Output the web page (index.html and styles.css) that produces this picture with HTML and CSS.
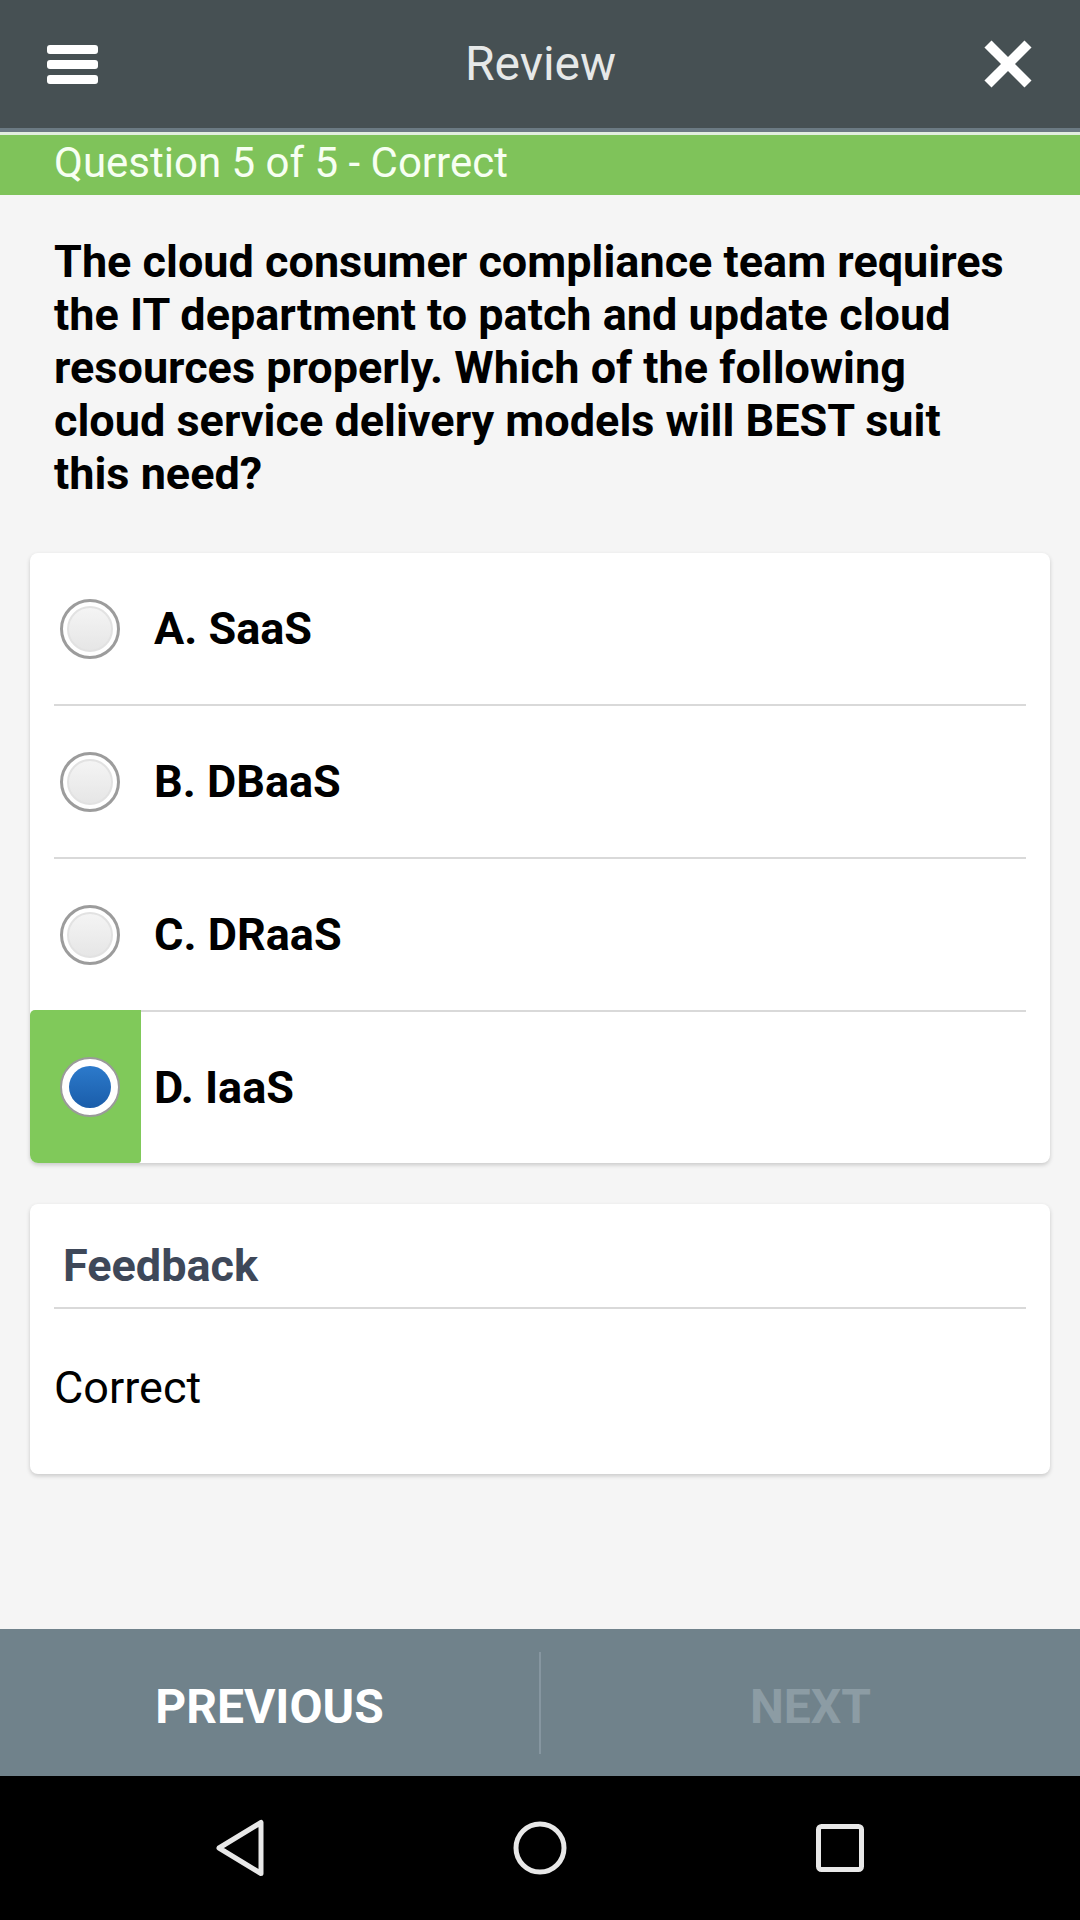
FILE: index.html
```html
<!DOCTYPE html>
<html lang="en">
<head>
<meta charset="utf-8">
<title>Review</title>
<link rel="stylesheet" href="styles.css">
</head>
<body>
<div class="app">
  <header class="topbar">
    <div class="menu-icon"><span></span><span></span><span></span></div>
    <h1 class="title">Review</h1>
    <svg class="close-icon" width="50" height="48" viewBox="0 0 50 48">
      <line x1="5" y1="4" x2="45" y2="44" />
      <line x1="45" y1="4" x2="5" y2="44" />
    </svg>
  </header>
  <div class="status">Question 5 of 5 - Correct</div>

  <main class="content">
    <p class="question">The cloud consumer compliance team requires the IT department to patch and update cloud resources properly. Which of the following cloud service delivery models will BEST suit this need?</p>

    <div class="card options">
      <div class="option">
        <div class="radio-cell"><span class="radio"></span></div>
        <span class="label">A. SaaS</span>
      </div>
      <div class="divider"></div>
      <div class="option">
        <div class="radio-cell"><span class="radio"></span></div>
        <span class="label">B. DBaaS</span>
      </div>
      <div class="divider"></div>
      <div class="option">
        <div class="radio-cell"><span class="radio"></span></div>
        <span class="label">C. DRaaS</span>
      </div>
      <div class="divider"></div>
      <div class="option selected">
        <div class="radio-cell"><span class="radio checked"></span></div>
        <span class="label">D. IaaS</span>
      </div>
    </div>

    <div class="card feedback">
      <h2 class="feedback-title">Feedback</h2>
      <div class="divider"></div>
      <p class="feedback-text">Correct</p>
    </div>
  </main>

  <nav class="pager">
    <button class="pager-btn prev">PREVIOUS</button>
    <span class="pager-sep"></span>
    <button class="pager-btn next">NEXT</button>
  </nav>

  <div class="sysnav">
    <div class="sys-cell">
      <svg width="50" height="58" viewBox="0 0 50 58">
        <polygon points="4,29 46,3.5 46,54.5" />
      </svg>
    </div>
    <div class="sys-cell">
      <svg width="54" height="54" viewBox="0 0 54 54">
        <circle cx="27" cy="27" r="24" />
      </svg>
    </div>
    <div class="sys-cell">
      <svg width="48" height="48" viewBox="0 0 48 48">
        <rect x="2.5" y="2.5" width="43" height="43" rx="3" />
      </svg>
    </div>
  </div>
</div>
</body>
</html>
```

FILE: styles.css
```css
* {
  box-sizing: border-box;
}

html, body {
  margin: 0;
  padding: 0;
}

body {
  width: 1080px;
  height: 1920px;
  font-family: Roboto, "Noto Sans", "Liberation Sans", sans-serif;
  background: #f5f5f5;
  overflow: hidden;
}

.app {
  display: flex;
  flex-direction: column;
  height: 1920px;
}

/* ---------- top bar ---------- */
.topbar {
  height: 132px;
  flex: none;
  background: #465053;
  border-bottom: 4px solid #6b7a83;
  display: flex;
  align-items: center;
  justify-content: space-between;
  padding: 0 47px;
}

.menu-icon {
  display: flex;
  flex-direction: column;
  gap: 6px;
  width: 51px;
}

.menu-icon span {
  display: block;
  height: 9px;
  border-radius: 3px;
  background: #ffffff;
}

.title {
  margin: 0;
  font-size: 48px;
  font-weight: 400;
  color: #e6e8e8;
  line-height: 1;
}

.close-icon line {
  stroke: #ffffff;
  stroke-width: 10;
}

.status {
  flex: none;
  height: 63px;
  border-top: 3px solid #e2eedf;
  background: #7fc35a;
  color: #f7fff2;
  font-size: 42px;
  line-height: 56px;
  padding-left: 54px;
}

/* ---------- content ---------- */
.content {
  flex: 1;
  padding-top: 40px;
}

.question {
  margin: 0;
  padding: 0 64px 0 54px;
  font-size: 45px;
  font-weight: 700;
  line-height: 53px;
  color: #000000;
}

.card {
  margin: 0 30px;
  background: #ffffff;
  border-radius: 8px;
  box-shadow: 0 2px 4px rgba(0, 0, 0, 0.18);
}

.options {
  margin-top: 53px;
}

.option {
  display: flex;
  align-items: center;
  height: 151px;
}

.radio-cell {
  align-self: stretch;
  width: 111px;
  padding-left: 30px;
  display: flex;
  align-items: center;
}

.option.selected .radio-cell {
  margin-top: -2px;
  background: #80c95a;
  border-radius: 5px 0 3px 8px;
}

.radio {
  width: 60px;
  height: 60px;
  border-radius: 50%;
  border: 3px solid #9c9c9c;
  background: #ffffff;
  display: flex;
  align-items: center;
  justify-content: center;
}

.radio::after {
  content: "";
  width: 42px;
  height: 42px;
  border-radius: 50%;
  border: 2px solid #e2e2e2;
  background: linear-gradient(#f4f4f4, #e6e6e6);
}

.radio.checked {
  border-width: 2.5px;
  border-color: #9a9a9a;
}

.radio.checked::after {
  width: 42px;
  height: 42px;
  border: none;
  background: linear-gradient(#2c7acb, #1a5daa);
}

.label {
  margin-left: 13px;
  font-size: 45px;
  font-weight: 700;
  color: #000000;
  line-height: 53px;
}

.divider {
  height: 2px;
  margin: 0 24px;
  background: #d9d9d9;
}

.feedback {
  margin-top: 41px;
}

.feedback-title {
  margin: 0;
  padding: 35px 0 0 33px;
  font-size: 45px;
  font-weight: 700;
  line-height: 53px;
  color: #3e4859;
}

.feedback .divider {
  margin-top: 15px;
}

.feedback-text {
  margin: 0;
  padding: 52px 0 60px 24px;
  font-size: 45px;
  font-weight: 400;
  line-height: 53px;
  color: #000000;
}

/* ---------- pager ---------- */
.pager {
  flex: none;
  height: 147px;
  background: #70828b;
  display: flex;
  align-items: center;
}

.pager-btn {
  flex: 1;
  height: 100%;
  border: none;
  background: transparent;
  font-family: Roboto, "Noto Sans", "Liberation Sans", sans-serif;
  font-size: 48px;
  font-weight: 700;
  padding: 7px 0 0;
}

.pager-btn.prev {
  color: #ffffff;
}

.pager-btn.next {
  color: #8c9ca4;
}

.pager-sep {
  width: 2px;
  height: 102px;
  background: #8696a0;
}

/* ---------- system nav ---------- */
.sysnav {
  flex: none;
  height: 144px;
  background: #000000;
  display: flex;
  justify-content: center;
  align-items: center;
}

.sys-cell {
  width: 300px;
  display: flex;
  justify-content: center;
  align-items: center;
}

.sys-cell svg * {
  fill: none;
  stroke: #e8e8e8;
  stroke-width: 5;
  stroke-linejoin: round;
}
```
